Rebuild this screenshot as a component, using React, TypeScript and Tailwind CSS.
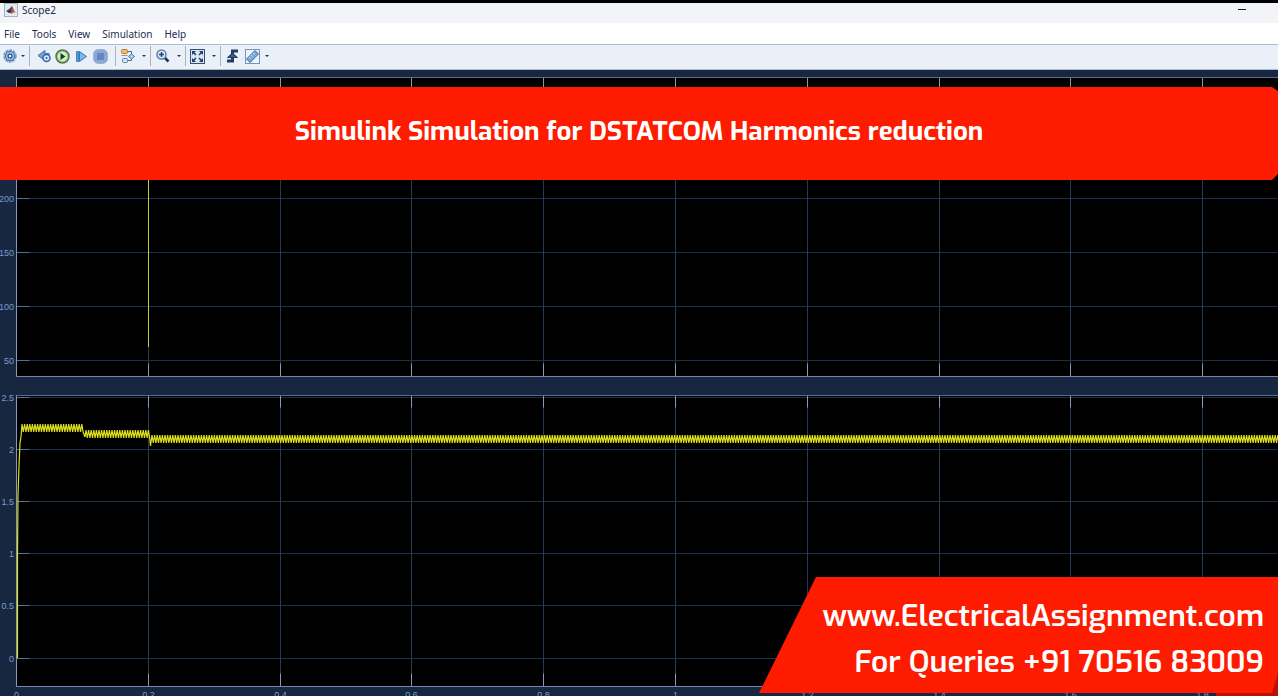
import type { ReactNode } from 'react';

interface Tick {
    label: string;
    y: number;
}

interface PlotProps {
    top: number;
    bottom: number;
    ticks: Tick[];
    showTimeAxis?: boolean;
    children: ReactNode;
}

const AXIS_X = 16.5;
const timeLabels = ['0', '0.2', '0.4', '0.6', '0.8', '1', '1.2', '1.4', '1.6', '1.8'];

const gridX = (i: number) => Math.floor(AXIS_X + i * 131.8) + 0.5;

const upperTicks: Tick[] = [
    { label: '200', y: 128 },
    { label: '150', y: 182 },
    { label: '100', y: 236 },
    { label: '50', y: 290 },
];

const lowerTicks: Tick[] = [
    { label: '2.5', y: 12 },
    { label: '2', y: 64 },
    { label: '1.5', y: 116 },
    { label: '1', y: 168 },
    { label: '0.5', y: 220 },
    { label: '0', y: 273 },
];

// steady ripple around y between two times
const ripple = (from: number, to: number, y: number) => {
    let d = '';
    for (let x = from; x < to; x += 2.6) {
        d += `L${x.toFixed(1)} ${y - 4}L${(x + 1.3).toFixed(1)} ${y + 4}`;
    }
    return d;
};

const thdTrace =
    'M17.5 273L17.5 170L18 110L19 80L20 58L21 52' +
    ripple(22, 84, 43) +
    'L85 52' +
    ripple(86, 149, 49) +
    'L150.5 61' +
    ripple(152, 2000, 54);

function Plot({ top, bottom, ticks, showTimeAxis, children }: PlotProps) {
    return (
        <>
            <rect x={AXIS_X} y={top} width="100%" height={bottom - top} fill="#000" />
            {ticks.map(({ label, y }) => (
                <g key={label}>
                    <line x1={AXIS_X} x2="100%" y1={y + 0.5} y2={y + 0.5} stroke="#1b3049" />
                    <line x1={AXIS_X} x2={AXIS_X + 13} y1={y + 0.5} y2={y + 0.5} stroke="#51709b" />
                    <text x="14" y={y + 4} textAnchor="end">{label}</text>
                </g>
            ))}
            {timeLabels.map((label, i) => (
                <g key={label}>
                    <line x1={gridX(i)} x2={gridX(i)} y1={top} y2={bottom} stroke="#243b56" />
                    <path d={`M${gridX(i)} ${top}v12M${gridX(i)} ${bottom}v-13`} stroke="#8797bc" />
                    {showTimeAxis && (
                        <text x={gridX(i)} y={bottom + 11} textAnchor="middle">{label}</text>
                    )}
                </g>
            ))}
            <line x1={AXIS_X} x2="100%" y1={top} y2={top} stroke="#596d94" />
            <line x1={AXIS_X} x2="100%" y1={bottom} y2={bottom} stroke="#7385ae" />
            <line x1={AXIS_X} x2={AXIS_X} y1={top} y2={bottom} stroke="#8797bc" />
            {children}
        </>
    );
}

function ToolButton({ label, children }: { label: string; children: ReactNode }) {
    return (
        <button type="button" aria-label={label} className="flex h-5 w-[19px] shrink-0 items-center justify-center">
            {children}
        </button>
    );
}

function Caret({ label }: { label: string }) {
    return (
        <button type="button" aria-label={label} className="flex h-5 w-2 shrink-0 items-center justify-center">
            <svg width="4" height="2" viewBox="0 0 4 2"><path d="M0 0h4L2 2z" fill="#26364d" /></svg>
        </button>
    );
}

function Divider() {
    return <span className="h-5 w-px shrink-0 bg-[#a8b2c4]" />;
}

function MatlabIcon() {
    return (
        <svg width="14" height="14" viewBox="0 0 14 14">
            <rect x="0.5" y="0.5" width="13" height="13" fill="#e3eaf3" stroke="#a3b2c6" />
            <path d="M2 8l3-2 3-3-1 5-2 2z" fill="#355f91" />
            <path d="M5 10l2-3 1-4c1 1 2 5 4 7-2-1-3-1-4 1-1-1-2-1-3-1z" fill="#b5533a" />
            <path d="M8 3l-1 6-2 1-2-1.500 3-1.500z" fill="#3a2c40" />
        </svg>
    );
}

function GearIcon() {
    return (
        <svg width="14" height="14" viewBox="0 0 14 14" fill="none">
            <circle cx="7" cy="7" r="6" stroke="#7f9dc8" strokeWidth="1.5" strokeDasharray="3 0.8" />
            <circle cx="7" cy="7" r="4.5" fill="#cfe0f3" stroke="#4677b4" strokeWidth="1.5" />
            <circle cx="7" cy="7" r="2" fill="#f3f8fd" stroke="#2c5c98" strokeWidth="1.5" />
        </svg>
    );
}

function StepBackIcon() {
    return (
        <svg width="14" height="14" viewBox="0 0 14 14">
            <path d="M1 6.5L8 1.5v3h4v5H8v2z" fill="#6ea3dc" stroke="#3c72ae" />
            <circle cx="9.5" cy="9" r="3.5" fill="#d6e5f4" stroke="#376aa4" strokeWidth="1.5" />
            <circle cx="9.5" cy="9" r="1" fill="#285a94" />
        </svg>
    );
}

function RunIcon() {
    return (
        <svg width="15" height="15" viewBox="0 0 15 15">
            <circle cx="7.5" cy="7.5" r="6.5" fill="#9fcc7c" stroke="#56735a" strokeWidth="1.5" />
            <circle cx="7.5" cy="7.5" r="4.5" fill="#d9f2be" />
            <path d="M5.5 4v7l5-3.5z" fill="#173c3a" />
        </svg>
    );
}

function StepForwardIcon() {
    return (
        <svg width="13" height="13" viewBox="0 0 13 13">
            <path d="M1.5 1.5h2v10h-2z" fill="#5b9ddd" stroke="#4284c4" />
            <path d="M4.5 1.5v10l7-5z" fill="#7cb7ec" stroke="#3578bc" />
        </svg>
    );
}

function StopIcon() {
    return (
        <svg width="15" height="15" viewBox="0 0 15 15">
            <rect x="0.5" y="0.5" width="14" height="14" rx="5" fill="#8ca9d6" stroke="#9caed0" />
            <rect x="4" y="4" width="7" height="7" fill="#6587bd" />
        </svg>
    );
}

function BlocksIcon() {
    return (
        <svg width="15" height="14" viewBox="0 0 15 14" fill="none">
            <path d="M8 2.5h3.5v3M7 11.5h4.5v-2" stroke="#566d8c" />
            <rect x="1.5" y="0.5" width="6" height="4" rx="1" fill="#f3bd72" stroke="#bd7933" />
            <path d="M8.5 7.5l3-2.5 3 2.5-3 2.5z" fill="#b5d1ef" stroke="#4975a8" />
            <path d="M1.5 6.5h6" stroke="#8a93a0" />
            <rect x="2.5" y="9.5" width="5" height="4" rx="1" fill="#d5e4f4" stroke="#5f82ad" />
        </svg>
    );
}

function ZoomIcon() {
    return (
        <svg width="14" height="14" viewBox="0 0 14 14" fill="none">
            <path d="M8.5 8.5l4 4" stroke="#23334e" strokeWidth="2.5" />
            <circle cx="5.5" cy="5.5" r="4.5" fill="#dcecfb" stroke="#5d7fa8" strokeWidth="1.5" />
            <path d="M3 5.5h5M5.5 3v5" stroke="#1d3f73" strokeWidth="1.5" />
        </svg>
    );
}

function FitIcon() {
    return (
        <svg width="15" height="15" viewBox="0 0 15 15">
            <rect x="0.5" y="0.5" width="14" height="14" fill="#dbe7f4" stroke="#354e75" />
            <path d="M2 2h4L2 6zM13 2v4L9 2zM2 13V9l4 4zM13 13H9l4-4z" fill="#253f68" />
            <path d="M3 3l3 3M12 3L9 6M3 12l3-3M12 12L9 9" stroke="#253f68" strokeWidth="1.5" />
        </svg>
    );
}

function TriggerIcon() {
    return (
        <svg width="13" height="14" viewBox="0 0 13 14" fill="none">
            <path d="M1 12h5.5V2H12" stroke="#243c60" strokeWidth="3" />
            <path d="M1.5 8.5L6.5 4l5 4.5z" fill="#38598a" stroke="#243c60" />
        </svg>
    );
}

function RulerIcon() {
    return (
        <svg width="15" height="15" viewBox="0 0 15 15">
            <rect x="0.5" y="0.5" width="14" height="14" fill="#edf4fb" stroke="#7d93b3" />
            <path d="M1.5 10L10 1.5 13.5 5 5 13.5z" fill="#76a9dc" stroke="#3b6ca5" />
            <path d="M4 8l1.5 1.5M6 6l1.5 1.5M8 4l1.5 1.5" stroke="#e4f0fc" />
        </svg>
    );
}

export default function App() {
    return (
        <div className="relative flex h-screen flex-col overflow-hidden bg-[#16273f] font-['Noto_Sans',sans-serif] text-[10px]">
            <header className="shrink-0 border-t-3 border-black bg-white text-[#1b2d50]">
                <div className="flex h-5 items-start gap-1 bg-[#f3f4f8] pl-1">
                    <MatlabIcon />
                    <h1 className="grow text-[10px] leading-[14px]">Scope2</h1>
                    <button type="button" aria-label="Minimize" className="mr-7 flex h-3 w-4 items-center justify-center">
                        <span className="h-px w-2 bg-[#1b1b28]" />
                    </button>
                </div>
                <nav className="flex h-[21px] items-center gap-3 pl-1 leading-4">
                    <button type="button">File</button>
                    <button type="button">Tools</button>
                    <button type="button">View</button>
                    <button type="button">Simulation</button>
                    <button type="button">Help</button>
                </nav>
                <div className="flex h-[26px] items-center border-y border-[#aebbd0] bg-[#e9f0f8] pb-0.5">
                    <div className="flex w-[29px] items-center justify-between pr-0.5">
                        <ToolButton label="Configuration"><GearIcon /></ToolButton>
                        <Caret label="Configuration options" />
                    </div>
                    <Divider />
                    <div className="flex w-[85px] items-center pl-1">
                        <ToolButton label="Step back"><StepBackIcon /></ToolButton>
                        <ToolButton label="Run"><RunIcon /></ToolButton>
                        <ToolButton label="Step forward"><StepForwardIcon /></ToolButton>
                        <ToolButton label="Stop"><StopIcon /></ToolButton>
                    </div>
                    <Divider />
                    <div className="flex w-[34px] items-center justify-between px-0.5">
                        <ToolButton label="Highlight block"><BlocksIcon /></ToolButton>
                        <Caret label="Highlight options" />
                    </div>
                    <Divider />
                    <div className="flex w-[34px] items-center justify-between px-0.5">
                        <ToolButton label="Zoom"><ZoomIcon /></ToolButton>
                        <Caret label="Zoom options" />
                    </div>
                    <Divider />
                    <div className="flex w-[34px] items-center justify-between px-0.5">
                        <ToolButton label="Scale axes"><FitIcon /></ToolButton>
                        <Caret label="Scale options" />
                    </div>
                    <Divider />
                    <div className="flex items-center gap-px pl-0.5">
                        <ToolButton label="Triggers"><TriggerIcon /></ToolButton>
                        <ToolButton label="Measurements"><RulerIcon /></ToolButton>
                        <Caret label="Measurement options" />
                    </div>
                </div>
            </header>

            <main className="flex grow flex-col font-['Liberation_Sans',sans-serif] text-[9px]">
                <svg className="h-[315px] w-full shrink-0 fill-[#7d9bd0]">
                    <Plot top={7.5} bottom={306.5} ticks={upperTicks}>
                        <line x1="148.5" x2="148.5" y1="60" y2="277" stroke="#c5cf31" />
                    </Plot>
                </svg>
                <svg className="w-full grow fill-[#7d9bd0]">
                    <Plot top={10.5} bottom={301.5} ticks={lowerTicks} showTimeAxis>
                        <path d={thdTrace} fill="none" stroke="#dce01c" strokeWidth="1.2" />
                    </Plot>
                </svg>
            </main>

            <div className="absolute inset-x-0 top-[87px] flex h-[93px] items-center justify-center bg-[#ff1b00] pb-1 font-[Exo,'Exo_2',Roboto,sans-serif] text-[26px] font-bold text-white [clip-path:polygon(0_0,calc(100%-6px)_0,100%_4px,100%_calc(100%-6px),calc(100%-6px)_100%,0_100%)]">
                <h2>Simulink Simulation for DSTATCOM Harmonics reduction</h2>
            </div>

            <div className="absolute right-0 bottom-0 h-10 w-[62px] bg-[#b81205]" />
            <div className="absolute right-0 bottom-[3px] h-[116px] w-[519px] bg-[#ff1b00] pt-4 pr-[14px] text-right font-[Exo,'Exo_2',Roboto,sans-serif] text-[30px] leading-[46px] font-semibold text-white [clip-path:polygon(57px_0,100%_0,100%_calc(100%-20px),calc(100%-6px)_100%,0_100%)]">
                <p><a href="https://www.ElectricalAssignment.com">www.ElectricalAssignment.com</a></p>
                <p>For Queries +91 70516 83009</p>
            </div>
        </div>
    );
}
